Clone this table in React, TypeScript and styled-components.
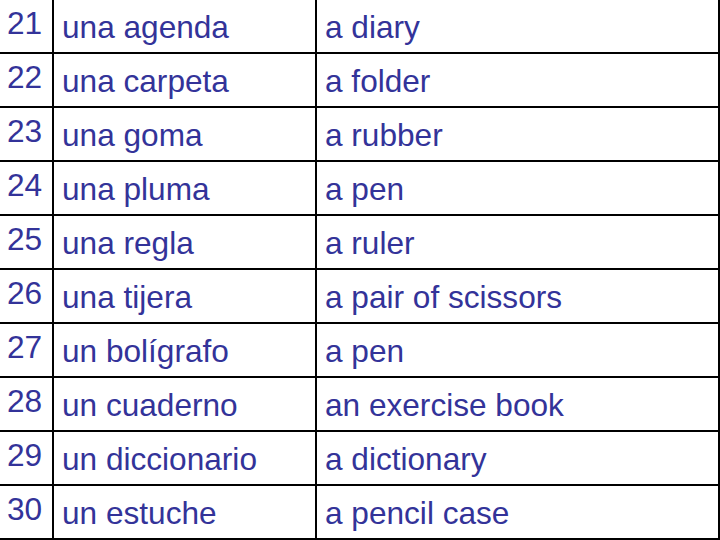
import styled, { createGlobalStyle } from "styled-components"

const GlobalStyle = createGlobalStyle`
    html, body {
        margin: 0;
        padding: 0;
        background: #ffffff;
    }
`

const words: [number, string, string][] = [
    [21, 'una agenda', 'a diary'],
    [22, 'una carpeta', 'a folder'],
    [23, 'una goma', 'a rubber'],
    [24, 'una pluma', 'a pen'],
    [25, 'una regla', 'a ruler'],
    [26, 'una tijera', 'a pair of scissors'],
    [27, 'un bolígrafo', 'a pen'],
    [28, 'un cuaderno', 'an exercise book'],
    [29, 'un diccionario', 'a dictionary'],
    [30, 'un estuche', 'a pencil case'],
]

const App = () => {
    return <>
        <GlobalStyle />
        <VocabTable>
            {
                words.map(([num, spanish, english]) => <Row key={num}>
                    <NumberCell>{num}</NumberCell>
                    <WordCell>{spanish}</WordCell>
                    <WordCell>{english}</WordCell>
                </Row>)
            }
        </VocabTable>
    </>
}

export default App

const VocabTable = styled.div`
    width: 720px;
    height: 540px;
    box-sizing: border-box;
    display: grid;
    grid-template-rows: repeat(10, 52px);
    row-gap: 2px;
    padding: 0 2px 2px 0;
    background: #000000;
    overflow: hidden;
`

const Row = styled.div`
    display: grid;
    grid-template-columns: 52px 261px 401px;
    column-gap: 2px;
`

const Cell = styled.div`
    background: #ffffff;
    color: #333399;
    font-family: "Liberation Sans", Arial, sans-serif;
    font-size: 31.6px;
    line-height: 32px;
    white-space: nowrap;
    overflow: hidden;
`

const NumberCell = styled(Cell)`
    padding: 7px 0 0 7px;
`

const WordCell = styled(Cell)`
    padding: 11px 0 0 8px;
`
